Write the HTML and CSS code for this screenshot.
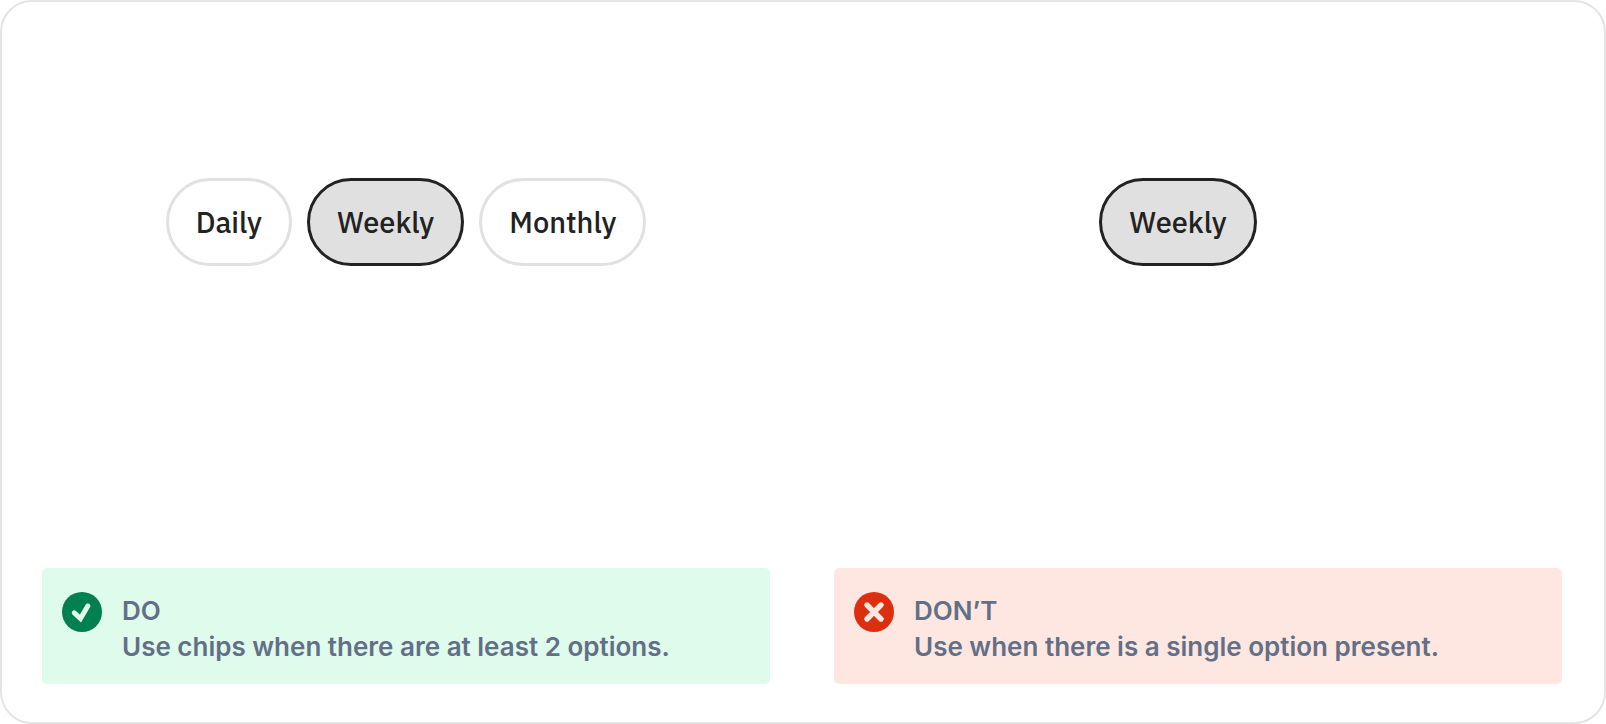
FILE: index.html
```html
<!DOCTYPE html>
<html lang="en">
<head>
<meta charset="utf-8">
<meta name="viewport" content="width=device-width, initial-scale=1">
<title>Chips usage</title>
<link rel="stylesheet" href="styles.css">
</head>
<body>
<main class="card">
  <section class="example">
    <div class="chips">
      <button class="chip" type="button" aria-pressed="false">Daily</button>
      <button class="chip" type="button" aria-pressed="true">Weekly</button>
      <button class="chip" type="button" aria-pressed="false">Monthly</button>
    </div>
    <div class="note note-do">
      <svg class="note-icon" viewBox="0 0 40 40" aria-hidden="true">
        <circle cx="20" cy="20" r="20" fill="#007f50"/>
        <path d="M12.3 20.8l6.2 5.8L25.8 14" fill="none" stroke="#e0fbeb" stroke-width="5" stroke-linecap="round"/>
      </svg>
      <div class="note-text">
        <p>DO</p>
        <p>Use chips when there are at least 2 options.</p>
      </div>
    </div>
  </section>
  <section class="example">
    <div class="chips chips-single">
      <button class="chip" type="button" aria-pressed="true">Weekly</button>
    </div>
    <div class="note note-dont">
      <svg class="note-icon" viewBox="0 0 40 40" aria-hidden="true">
        <circle cx="20" cy="20" r="20" fill="#dc2f0f"/>
        <path d="M13 13l14 14M27 13L13 27" fill="none" stroke="#ffe7e1" stroke-width="5.4" stroke-linecap="round"/>
      </svg>
      <div class="note-text">
        <p>DON’T</p>
        <p>Use when there is a single option present.</p>
      </div>
    </div>
  </section>
</main>
</body>
</html>
```

FILE: styles.css
```css
* {
  box-sizing: border-box;
}

body {
  margin: 0;
  background: #fff;
}

.card {
  display: grid;
  grid-template-columns: 1fr 1fr;
  gap: 64px;
  min-height: 100vh;
  padding: 176px 42px 38px 40px;
  border: 2px solid #e4e4e4;
  border-radius: 32px;
}

.example {
  display: flex;
  flex-direction: column;
  justify-content: space-between;
  gap: 40px;
}

.chips {
  display: flex;
  justify-content: center;
  gap: 15px;
}

.chips-single {
  padding-right: 40px;
}

.chip {
  height: 88px;
  padding: 0 27px;
  border: 3px solid #e1e1e1;
  border-radius: 44px;
  background: #fff;
  color: #222;
  font: 500 29px/40px "IBM Plex Sans", "Noto Sans", sans-serif;
}

.chip[aria-pressed="true"] {
  border-color: #222;
  background: #e0e0e0;
}

.note {
  display: flex;
  align-items: flex-start;
  gap: 20px;
  padding: 24px 20px 19px;
  border-radius: 5px;
  color: #626f86;
  font: 600 26px/36px Inter, sans-serif;
  font-optical-sizing: none;
}

.note-do {
  background: #dffbeb;
}

.note-dont {
  background: #ffe7e1;
}

.note-icon {
  flex: none;
  width: 40px;
  height: 40px;
}

.note-text {
  padding-top: 1px;
}

.note-text p {
  margin: 0;
}
```
